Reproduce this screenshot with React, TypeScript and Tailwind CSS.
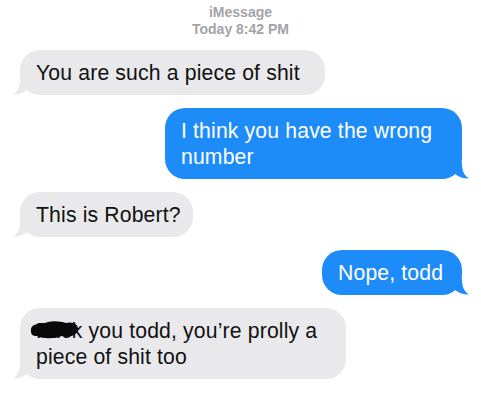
import React from "react";

const font = { fontFamily: '"Liberation Sans", Arial, sans-serif' };

function LeftTail() {
  return (
    <svg
      className="absolute left-[-7px] bottom-0"
      width="20"
      height="16"
      viewBox="0 0 20 16"
    >
      <path d="M7 0 C7 8 5 12 0 15.5 C6 15.5 10 14 14 11 L14 0 Z" fill="#e9e9eb" />
    </svg>
  );
}

function RightTail() {
  return (
    <svg
      className="absolute right-[-7px] bottom-0"
      width="20"
      height="16"
      viewBox="0 0 20 16"
    >
      <path d="M13 0 C13 8 15 12 20 15.5 C14 15.5 10 14 6 11 L6 0 Z" fill="#1e8cf8" />
    </svg>
  );
}

function Left({ children, className = "" }: { children: React.ReactNode; className?: string }) {
  return (
    <div className="flex justify-start">
      <div
        className={`relative rounded-[20px] bg-[#e9e9eb] text-[#111111] pl-[16px] py-[9.5px] text-[21.2px] leading-[26px] tracking-[0.15px] whitespace-nowrap ${className}`}
      >
        <LeftTail />
        <span className="relative">{children}</span>
      </div>
    </div>
  );
}

function Right({ children, className = "" }: { children: React.ReactNode; className?: string }) {
  return (
    <div className="flex justify-end">
      <div
        className={`relative rounded-[20px] bg-[#1e8cf8] text-white pl-[16px] py-[9.5px] text-[21.2px] leading-[26px] tracking-[0.15px] whitespace-nowrap ${className}`}
      >
        <RightTail />
        <span className="relative">{children}</span>
      </div>
    </div>
  );
}

export default function App() {
  return (
    <div className="w-[481px] h-[406px] bg-white overflow-hidden" style={font}>
      <div className="pt-[4px] flex flex-col items-center text-[14px] leading-[17px] font-semibold text-[#a3a3a8]">
        <div>iMessage</div>
        <div>Today 8:42 PM</div>
      </div>
      <div className="mt-[12px] pl-[20px] pr-[19px] flex flex-col gap-[13px]">
        <Left className="w-[305px]">You are such a piece of shit</Left>
        <Right className="w-[297px]">
          I think you have the wrong
          <br />
          number
        </Right>
        <Left className="w-[173px]">This is Robert?</Left>
        <Right className="w-[140px]">Nope, todd</Right>
        <Left className="w-[326px]">
          <span className="relative inline-block">
            Fuck
            <svg
              className="absolute left-[-7px] top-[2px]"
              width="52"
              height="20"
              viewBox="0 0 52 20"
            >
              <path
                d="M2 11 C1 5 8 3 14 4 C20 0 31 1 37 3 C43 1 50 4 49 10 C48 15 41 18 33 16 C25 19 14 19 8 16 C3 16 2 14 2 11 Z"
                fill="#0a0a0a"
              />
            </svg>
          </span>{" "}
          you todd, you’re prolly a
          <br />
          piece of shit too
        </Left>
      </div>
    </div>
  );
}
